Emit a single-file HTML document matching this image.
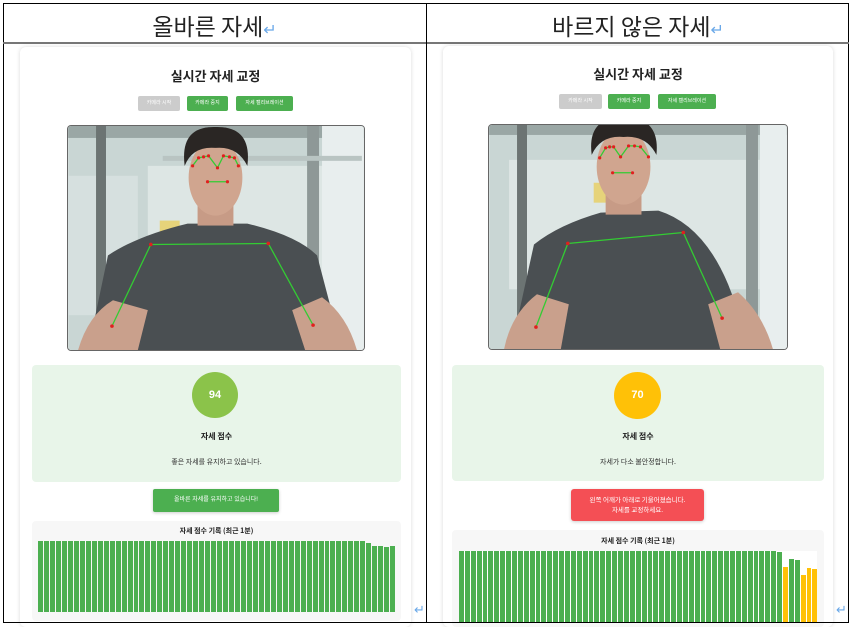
<!DOCTYPE html>
<html><head><meta charset="utf-8">
<style>
*{margin:0;padding:0;box-sizing:border-box}
body{width:850px;height:627px;background:#fff;position:relative;overflow:hidden;font-family:"Liberation Sans","Noto Sans CJK KR",sans-serif;}
.a{position:absolute}
.hd{font-size:23px;color:#222;text-align:center;font-family:"Noto Sans CJK KR",sans-serif;}
.ret{color:#6aa8e8;font-size:16px}
.card{background:#fff;border-radius:6px;box-shadow:0 0 4px rgba(0,0,0,.15)}
.t{font-weight:bold;font-size:13px;color:#222;text-align:center;font-family:"Noto Sans CJK KR",sans-serif}
.btn{font-size:5px;color:#fff;text-align:center;line-height:15px;border-radius:2px;background:#4caf50}
.score{background:#e8f5e9;border-radius:4px}
.circ{border-radius:50%;color:#fff;font-weight:bold;font-size:11px;text-align:center;line-height:46px}
.lbl{font-size:8px;font-weight:bold;color:#222;text-align:center;font-family:"Noto Sans CJK KR",sans-serif}
.sm{font-size:7px;color:#333;text-align:center;font-family:"Noto Sans CJK KR",sans-serif}
.chart{background:#f7f7f7;border-radius:4px}
.bars{display:flex;align-items:flex-end;gap:1px}
.bars div{flex:1;background:#4caf50;height:100%}
.bars div.y{background:#ffc107}
</style></head><body>
<!-- table lines -->
<div class="a" style="left:3px;top:3px;width:846px;height:620px;border:1px solid #000"></div>
<div class="a" style="left:3px;top:42px;width:846px;height:2px;background:#777"></div>
<div class="a" style="left:426px;top:3px;width:1px;height:620px;background:#000"></div>
<div class="a hd" style="left:3px;top:8px;width:423px">올바른 자세<span class="ret">↵</span></div>
<div class="a hd" style="left:427px;top:8px;width:422px">바르지 않은 자세<span class="ret">↵</span></div>
<div class="a ret" style="left:414px;top:602px;font-size:13px">↵</div>
<div class="a ret" style="left:836px;top:602px;font-size:13px">↵</div>

<!-- LEFT -->
<div class="a card" style="left:20px;top:47px;width:391px;height:580px"></div>
<div class="a t" style="left:20px;top:66px;width:391px">실시간 자세 교정</div>
<div class="a btn" style="left:138px;top:96px;width:42px;background:#ccc">카메라 시작</div>
<div class="a btn" style="left:187px;top:96px;width:41px">카메라 중지</div>
<div class="a btn" style="left:236px;top:96px;width:57px">자세 캘리브레이션</div>
<svg class="a" style="left:67px;top:125px;border:1px solid #666;border-radius:4px" width="298" height="226" viewBox="0 0 297 225">
<rect width="297" height="225" fill="#c9d6d4"/>
<rect x="0" y="0" width="297" height="12" fill="#9aa7a5"/>
<rect x="80" y="40" width="210" height="130" fill="#dde6e4"/>
<rect x="0" y="50" width="70" height="140" fill="#d6e0df"/>
<rect x="28" y="0" width="10" height="225" fill="#6c7473"/>
<rect x="240" y="0" width="12" height="225" fill="#8e9897"/>
<rect x="255" y="0" width="42" height="225" fill="#e8eeee"/>
<rect x="95" y="30" width="200" height="5" fill="#b9c4c2"/>
<rect x="92" y="95" width="20" height="20" fill="#e6d37a"/>
<path d="M20 225 L40 130 Q70 110 120 98 L180 98 Q230 110 250 130 L275 225 Z" fill="#4a4f52"/>
<path d="M10 225 Q20 190 45 175 L80 185 L70 225 Z" fill="#c9a08c"/>
<path d="M290 225 Q280 190 255 172 L225 185 L238 225 Z" fill="#c9a08c"/>
<rect x="130" y="70" width="36" height="30" fill="#c79b86"/>
<ellipse cx="148" cy="52" rx="27" ry="38" fill="#d0a58f"/>
<path d="M117 40 Q112 0 148 1 Q185 0 180 40 Q170 20 148 22 Q125 20 117 40Z" fill="#2a2624"/>
<g stroke="#33cc33" stroke-width="1.3" fill="none">
<polyline points="83,119 201,118"/><polyline points="83,119 44,201"/><polyline points="201,118 246,200"/>
<polyline points="125,40 131,32 136,31 141,30 150,42 156,30 162,31 167,32 171,40"/>
<polyline points="140,56 160,56"/></g>
<g fill="#e0201e"><circle cx="83" cy="119" r="1.8"/><circle cx="201" cy="118" r="1.8"/><circle cx="44" cy="201" r="1.8"/><circle cx="246" cy="200" r="1.8"/>
<circle cx="125" cy="40" r="1.6"/><circle cx="131" cy="32" r="1.6"/><circle cx="136" cy="31" r="1.6"/><circle cx="141" cy="30" r="1.6"/><circle cx="150" cy="42" r="1.6"/><circle cx="156" cy="30" r="1.6"/><circle cx="162" cy="31" r="1.6"/><circle cx="167" cy="32" r="1.6"/><circle cx="171" cy="40" r="1.6"/><circle cx="140" cy="56" r="1.6"/><circle cx="160" cy="56" r="1.6"/></g>
</svg>
<div class="a score" style="left:32px;top:365px;width:369px;height:117px"></div>
<div class="a circ" style="left:192px;top:372px;width:46px;height:46px;background:#8bc34a">94</div>
<div class="a lbl" style="left:32px;top:431px;width:369px">자세 점수</div>
<div class="a sm" style="left:32px;top:457px;width:369px">좋은 자세를 유지하고 있습니다.</div>
<div class="a btn" style="left:153px;top:489px;width:126px;height:23px;line-height:23px;font-size:6px;box-shadow:0 1px 3px rgba(0,0,0,.2)">올바른 자세를 유지하고 있습니다!</div>
<div class="a chart" style="left:32px;top:521px;width:369px;height:100px"></div>
<div class="a lbl" style="left:32px;top:526px;width:369px;font-size:7px">자세 점수 기록 (최근 1분)</div>
<div class="a bars" style="left:38px;top:541px;width:357px;height:71px">
<div></div><div></div><div></div><div></div><div></div><div></div><div></div><div></div><div></div><div></div><div></div><div></div><div></div><div></div><div></div><div></div><div></div><div></div><div></div><div></div><div></div><div></div><div></div><div></div><div></div><div></div><div></div><div></div><div></div><div></div><div></div><div></div><div></div><div></div><div></div><div></div><div></div><div></div><div></div><div></div><div></div><div></div><div></div><div></div><div></div><div></div><div></div><div></div><div></div><div></div><div></div><div></div><div></div><div></div><div></div><div style="height:97%"></div><div style="height:93%"></div><div style="height:93%"></div><div style="height:91%"></div><div style="height:93%"></div></div>

<!-- RIGHT -->
<div class="a card" style="left:443px;top:46px;width:390px;height:581px"></div>
<div class="a t" style="left:443px;top:64px;width:390px">실시간 자세 교정</div>
<div class="a btn" style="left:559px;top:94px;width:43px;background:#ccc">카메라 시작</div>
<div class="a btn" style="left:608px;top:94px;width:42px">카메라 중지</div>
<div class="a btn" style="left:658px;top:94px;width:58px">자세 캘리브레이션</div>
<svg class="a" style="left:488px;top:124px;border:1px solid #666;border-radius:4px" width="300" height="226" viewBox="0 0 299 225">
<rect width="299" height="225" fill="#c9d6d4"/>
<rect x="0" y="0" width="299" height="10" fill="#9aa7a5"/>
<rect x="20" y="35" width="260" height="130" fill="#dde6e4"/>
<rect x="28" y="0" width="10" height="225" fill="#6c7473"/>
<rect x="258" y="0" width="12" height="225" fill="#8e9897"/>
<rect x="272" y="0" width="27" height="225" fill="#e8eeee"/>
<rect x="105" y="58" width="14" height="20" fill="#e6d37a"/>
<path d="M22 225 L45 120 Q70 100 112 88 L170 86 Q215 100 240 160 L265 225 Z" fill="#4a4f52"/>
<path d="M15 225 Q22 190 48 170 L80 180 L72 225 Z" fill="#c9a08c"/>
<path d="M285 225 Q275 190 250 168 L220 180 L232 225 Z" fill="#c9a08c"/>
<rect x="117" y="60" width="36" height="30" fill="#c79b86"/>
<ellipse cx="135" cy="42" rx="27" ry="38" fill="#d0a58f"/>
<path d="M103 30 Q98 -8 135 -8 Q172 -8 168 30 Q158 10 135 12 Q112 10 103 30Z" fill="#2a2624"/>
<g stroke="#33cc33" stroke-width="1.3" fill="none">
<polyline points="79,119 195,108"/><polyline points="79,119 47,203"/><polyline points="195,108 234,194"/>
<polyline points="111,33 117,23 121,22 125,22 132,32 140,21 146,21 152,22 160,32"/>
<polyline points="124,48 144,48"/></g>
<g fill="#e0201e"><circle cx="79" cy="119" r="1.8"/><circle cx="195" cy="108" r="1.8"/><circle cx="47" cy="203" r="1.8"/><circle cx="234" cy="194" r="1.8"/>
<circle cx="111" cy="33" r="1.6"/><circle cx="117" cy="23" r="1.6"/><circle cx="121" cy="22" r="1.6"/><circle cx="125" cy="22" r="1.6"/><circle cx="132" cy="32" r="1.6"/><circle cx="140" cy="21" r="1.6"/><circle cx="146" cy="21" r="1.6"/><circle cx="152" cy="22" r="1.6"/><circle cx="160" cy="32" r="1.6"/><circle cx="124" cy="48" r="1.6"/><circle cx="144" cy="48" r="1.6"/></g>
</svg>
<div class="a score" style="left:452px;top:365px;width:372px;height:116px"></div>
<div class="a circ" style="left:614px;top:372px;width:47px;height:47px;background:#ffc107">70</div>
<div class="a lbl" style="left:452px;top:431px;width:372px">자세 점수</div>
<div class="a sm" style="left:452px;top:457px;width:372px">자세가 다소 불안정합니다.</div>
<div class="a sm" style="left:571px;top:489px;width:133px;height:32px;background:#f44f55;color:#fff;border-radius:3px;font-size:6.5px;line-height:10px;padding-top:5px;box-shadow:0 1px 3px rgba(0,0,0,.2)">왼쪽 어깨가 아래로 기울어졌습니다.<br>자세를 교정하세요.</div>
<div class="a chart" style="left:452px;top:530px;width:372px;height:97px"></div>
<div class="a lbl" style="left:452px;top:536px;width:372px;font-size:7px">자세 점수 기록 (최근 1분)</div>
<div class="a" style="left:459px;top:551px;width:358px;height:72px;background:#fff"></div>
<div class="a bars" style="left:459px;top:551px;width:358px;height:72px">
<div></div><div></div><div></div><div></div><div></div><div></div><div></div><div></div><div></div><div></div><div></div><div></div><div></div><div></div><div></div><div></div><div></div><div></div><div></div><div></div><div></div><div></div><div></div><div></div><div></div><div></div><div></div><div></div><div></div><div></div><div></div><div></div><div></div><div></div><div></div><div></div><div></div><div></div><div></div><div></div><div></div><div></div><div></div><div></div><div></div><div></div><div></div><div></div><div></div><div></div><div></div><div></div><div></div><div></div><div style="height:98%"></div><div class="y" style="height:78%"></div><div style="height:89%"></div><div style="height:88%"></div><div class="y" style="height:66%"></div><div class="y" style="height:76%"></div><div class="y" style="height:75%"></div></div>
<div class="a" style="left:3px;top:622px;width:846px;height:1px;background:#000"></div>
</body></html>
